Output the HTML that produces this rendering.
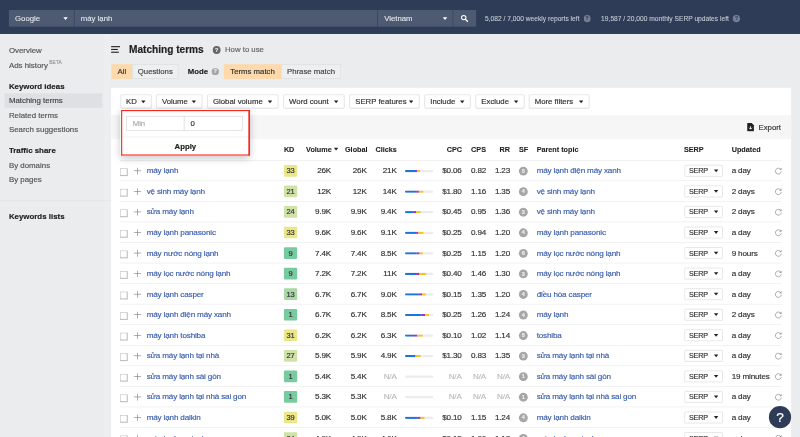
<!DOCTYPE html>
<html lang="vi">
<head>
<meta charset="utf-8">
<title>Matching terms - máy lạnh</title>
<style>
*{box-sizing:border-box;margin:0;padding:0}
html,body{width:800px;height:437px;overflow:hidden;background:#ebecee}
body{position:relative}
body{font-family:"Liberation Sans",sans-serif;font-size:14px;color:#333;-webkit-text-stroke:0.3px currentColor}
#wrap{position:absolute;left:-20px;top:-20px;width:840px;height:477px;overflow:hidden;filter:blur(0.5px)}
#stage{position:absolute;left:20px;top:20px;width:1440px;height:787px;transform:scale(0.55556);transform-origin:0 0;background:#ebecee;overflow:hidden}
a{color:#3b5eae;text-decoration:none}
.caret{display:inline-block;width:0;height:0;border-left:4px solid transparent;border-right:4px solid transparent;border-top:5px solid #222;vertical-align:middle}
/* header */
#hdr{position:absolute;left:0;top:0;width:1440px;height:61px;background:#2e3c57;-webkit-text-stroke:0.15px currentColor;border-bottom:1px solid #27334a}
#hdr .box{position:absolute;top:18px;height:30px;background:#4e5a72;color:#e6e9ee;font-size:14px;line-height:30px;padding-left:11px}
#hdr .box .caret{position:absolute;right:9px;top:13px;border-top-color:#fff}
#hdr .info{position:absolute;top:18px;line-height:30px;font-size:12px;color:#c6ccd6;white-space:nowrap}
#hdr .info .q{width:12.5px;height:12.5px;line-height:12.5px;font-size:9px;background:#747e94;color:#2e3c57;margin-left:0.8px;position:relative;top:-0.5px}
.q{display:inline-block;width:14px;height:14px;border-radius:50%;background:#8e96a6;color:#2e3c57;font-size:10px;font-weight:bold;line-height:14px;text-align:center;vertical-align:middle}
/* sidebar */
#side{position:absolute;left:0;top:60px;width:200px;height:727px}
#side div{position:absolute;left:8px;width:176px;height:26px;line-height:26px;padding-left:8px;font-size:14.2px;color:#555;white-space:nowrap}
#side div.h{font-weight:bold;color:#222}
#side div.act{background:#dee0e4;color:#444}
#side sup{font-size:8.5px;letter-spacing:0.3px;color:#999;position:relative;top:0px;left:2.5px;vertical-align:super;line-height:0}
#side hr{position:absolute;left:0;top:301px;width:200px;height:1px;border:0;background:#dfe0e3}
/* main */
#title{position:absolute;left:232.3px;top:77.8px;line-height:24px;font-size:18.2px;letter-spacing:0;font-weight:bold;color:#222;white-space:nowrap}
#burger{position:absolute;left:200px;top:83px;width:16px;height:13px}
#burger i{position:absolute;left:0;height:2px;background:#222}
#howq{position:absolute;left:382.6px;top:82.6px;width:14.5px;height:14.5px;line-height:14.5px}
#how{position:absolute;left:405px;top:76.8px;line-height:24px;color:#666;white-space:nowrap}
.seg{position:absolute;top:116px;height:26px;line-height:24px;border:1px solid #d8d9dc;font-size:14px;color:#444;text-align:center;white-space:nowrap;background:#eeeff1}
.seg.on{background:#fdd9ab;border-color:#fdd9ab;color:#333}
#mode{position:absolute;left:338px;top:116px;line-height:26px;font-weight:bold;color:#222}
#panel{position:absolute;left:200px;top:157.6px;width:1224px;height:640px;background:#fff}
.fb{position:absolute;top:170px;height:25px;line-height:24.2px;border:1px solid #d6d6d6;border-radius:2px;background:#fff;font-size:14px;color:#333;padding-left:9.4px;white-space:nowrap;box-shadow:0 1px 1px rgba(0,0,0,.05)}
.fb .caret{position:absolute;right:10px;top:9.6px}
#tool{position:absolute;left:200px;top:207px;width:1224px;height:43px;background:#f6f6f6}
#export{position:absolute;left:1365.3px;top:216.2px;line-height:26px;color:#333;white-space:nowrap}
#expi{position:absolute;left:1344px;top:221px;width:14px;height:15.5px}
/* table */
#th{position:absolute;left:216px;top:250.4px;width:1191px;height:38.4px;border-bottom:1px solid #e6e6e6;font-weight:bold;color:#222;font-size:13px;-webkit-text-stroke:0.15px currentColor}
#th span{position:absolute;top:0;line-height:38px;white-space:nowrap}
.tr{position:absolute;left:216px;width:1191px;height:37px;border-bottom:1px solid #e8e8e8;line-height:36.6px;font-size:14.6px;letter-spacing:-0.3px;white-space:nowrap}
.tr>*{position:absolute;top:0}
.cb{left:-0.4px;top:13.6px!important;width:14.4px;height:14.4px;background:linear-gradient(#fff,#fff) center/11.2px 11.2px no-repeat,#bebebe}
.plus{left:25.3px;top:12.6px!important;width:12px;height:12px}
.plus:before{content:"";position:absolute;left:0;top:5.1px;width:12.4px;height:1.7px;background:#707070}
.plus:after{content:"";position:absolute;left:5.3px;top:0;width:1.7px;height:12px;background:#707070}
.kw{left:48px}
.kd{left:295px;top:8px!important;width:24px;height:21px;line-height:21px;text-align:center;border-radius:2px;color:#333;font-size:13.5px}
.c{text-align:right;width:80px;color:#333}
.c.na{color:#bbb}
.vol{left:300px}.glob{left:364px}.clk{left:418px}.cpc{left:535px}.cps{left:579px}.rr{left:622px}
.bar{left:513px;top:16.5px!important;width:51px;height:4px;background:#ececec;border-radius:2px;overflow:hidden;font-size:0;line-height:0}
.bar i{display:inline-block;height:4px;vertical-align:top}
.sf{left:718px;top:10.5px!important;width:16px;height:16px;border-radius:50%;background:#a6a6a6;color:#ececec;font-size:10px;font-weight:bold;line-height:16px;text-align:center;letter-spacing:0}
.pt{left:750px}
.serp{left:1016px;top:8px!important;width:69px;height:21px;line-height:19px;border:1px solid #d6d6d6;border-radius:2px;padding-left:7px;color:#333;font-size:13px}
.serp .caret{position:absolute;right:7.5px;top:7px}
.upd{left:1101px;color:#333}
.rf{left:1177.5px;top:11.5px!important;width:14px;height:14px}
#stage2{position:absolute;left:0;top:0;width:1440px;height:787px;transform:scale(0.55556);transform-origin:0 0;pointer-events:none}
#red{position:absolute;left:217.7px;top:197.8px;width:232px;height:82.1px}
#red i{position:absolute;background:#f8241e}
/* popup */
#pop{position:absolute;left:217.2px;top:197.4px;width:232.8px;height:83px;background:#fff;border:2.9px solid #fff;box-shadow:0 4px 14px rgba(0,0,0,.24)}
#pop .in{position:absolute;top:9.2px;height:26px;line-height:24px;border:1px solid #d0d0d0;background:#fff;padding-left:11px;font-size:14px}
#pop .sep{position:absolute;left:0;right:0;top:46.2px;height:1px;background:#e6e6e6}
#pop .ap{position:absolute;left:0;right:0;top:50.2px;line-height:26px;text-align:center;font-weight:bold;color:#222}
#help{position:absolute;left:1384px;top:730.6px;width:40px;height:40px;border-radius:50%;background:#2e3c57;color:#fff;font-size:24.5px;font-weight:normal;line-height:40px;text-align:center;-webkit-text-stroke:0.4px #fff}
</style>
</head>
<body>
<div id="wrap"><div id="stage">
<div style="position:absolute;left:187px;top:40px;width:13px;height:750px;background:#edeef0"></div>
<div id="hdr">
 <div class="box" style="left:16px;width:117px">Google<b class="caret" style="right:11px"></b></div>
 <div class="box" style="left:134px;width:545px;padding-left:11.3px">máy lạnh</div>
 <div class="box" style="left:680px;width:135px;padding-left:11.5px">Vietnam<b class="caret" style="right:10px"></b></div>
 <div class="box" style="left:816px;width:41px;padding:0"><svg viewBox="0 0 16 16" style="position:absolute;left:13px;top:8px;width:14px;height:14px"><circle cx="6.5" cy="6.5" r="4.5" fill="none" stroke="#fff" stroke-width="2.2"/><path d="M10 10l4.5 4.5" stroke="#fff" stroke-width="2.6" stroke-linecap="round"/></svg></div>
 <div class="info" style="left:873px">5,082 / 7,000 weekly reports left &nbsp;<span class="q">?</span></div>
 <div class="info" style="left:1082px">19,587 / 20,000 monthly SERP updates left &nbsp;<span class="q">?</span></div>
</div>
<div id="side">
 <div style="top:18px">Overview</div>
 <div style="top:44px">Ads history<sup>BETA</sup></div>
 <div class="h" style="top:82px">Keyword ideas</div>
 <div class="act" style="top:108px">Matching terms</div>
 <div style="top:134px">Related terms</div>
 <div style="top:160px">Search suggestions</div>
 <div class="h" style="top:198px">Traffic share</div>
 <div style="top:224px">By domains</div>
 <div style="top:250px">By pages</div>
 <hr>
 <div class="h" style="top:317px">Keywords lists</div>
</div>
<div id="burger"><i style="top:0;width:16px"></i><i style="top:5px;width:12px"></i><i style="top:10px;width:14px"></i></div>
<div id="title">Matching terms</div>
<span id="howq" class="q" style="background:#666;color:#ebecee">?</span>
<div id="how">How to use</div>
<div class="seg on" style="left:201px;width:37px">All</div>
<div class="seg" style="left:238px;width:83px">Questions</div>
<div id="mode">Mode <span class="q" style="background:#a4a4a6;color:#ebecee;margin-left:3px;position:relative;top:-1px;width:12.4px;height:12.4px;line-height:12.4px;font-size:9px">?</span></div>
<div class="seg on" style="left:403px;width:103px">Terms match</div>
<div class="seg" style="left:506px;width:107.5px">Phrase match</div>
<div id="panel"></div>
<div class="fb" style="left:217px;width:56px;padding-left:9px">KD<b class="caret"></b></div>
<div class="fb" style="left:281px;width:83px">Volume<b class="caret"></b></div>
<div class="fb" style="left:373px;width:128px">Global volume<b class="caret"></b></div>
<div class="fb" style="left:510px;width:110px">Word count<b class="caret"></b></div>
<div class="fb" style="left:629px;width:126px">SERP features<b class="caret"></b></div>
<div class="fb" style="left:764px;width:83px">Include<b class="caret"></b></div>
<div class="fb" style="left:856px;width:88px">Exclude<b class="caret"></b></div>
<div class="fb" style="left:952px;width:109px">More filters<b class="caret"></b></div>
<div id="tool"></div>
<svg id="expi" viewBox="0 0 14 15"><path d="M1 0h8l4 4v11H1z" fill="#222"/><path d="M7 6v5M4.5 8.8L7 11.3 9.5 8.8" stroke="#fff" stroke-width="1.6" fill="none"/></svg>
<div id="export">Export</div>
<div id="th">
 <span style="left:295px">KD</span>
 <span style="left:335px">Volume <b class="caret" style="position:relative;top:-1px"></b></span>
 <span style="left:405px">Global</span>
 <span style="left:460px">Clicks</span>
 <span style="left:588px">CPC</span>
 <span style="left:632px">CPS</span>
 <span style="left:683px">RR</span>
 <span style="left:718px">SF</span>
 <span style="left:750px">Parent topic</span>
 <span style="left:1015px">SERP</span>
 <span style="left:1101px">Updated</span>
</div>
<div id="rows">
<div class="tr" style="top:289.0px">
<span class="cb"></span><span class="plus"></span>
<a class="kw">máy lạnh</a>
<span class="kd" style="background:#eae689">33</span>
<div class="c vol">26K</div><div class="c glob">26K</div><div class="c clk">21K</div>
<div class="bar"><i style="width:18px;background:#1f72e0"></i><i style="width:4px;background:#9a35bd"></i><i style="width:5px;background:#f7c61a"></i></div>
<div class="c cpc">$0.06</div><div class="c cps">0.82</div><div class="c rr">1.23</div>
<span class="sf">5</span>
<a class="pt">máy lạnh điện máy xanh</a>
<span class="serp">SERP<b class="caret"></b></span>
<span class="upd">a day</span>
<svg class="rf" viewBox="0 0 14 14"><path d="M11.4 4A5.3 5.3 0 1 0 12.3 7.6" fill="none" stroke="#9a9a9a" stroke-width="1.5"/><path d="M12.8 0.8v4.4H8.4z" fill="#9a9a9a"/></svg>
</div>
<div class="tr" style="top:326.0px">
<span class="cb"></span><span class="plus"></span>
<a class="kw">vệ sinh máy lạnh</a>
<span class="kd" style="background:#cfe3a8">21</span>
<div class="c vol">12K</div><div class="c glob">12K</div><div class="c clk">14K</div>
<div class="bar"><i style="width:20px;background:#1f72e0"></i><i style="width:5px;background:#9a35bd"></i><i style="width:8px;background:#f7c61a"></i></div>
<div class="c cpc">$1.80</div><div class="c cps">1.16</div><div class="c rr">1.35</div>
<span class="sf">4</span>
<a class="pt">vệ sinh máy lạnh</a>
<span class="serp">SERP<b class="caret"></b></span>
<span class="upd">2 days</span>
<svg class="rf" viewBox="0 0 14 14"><path d="M11.4 4A5.3 5.3 0 1 0 12.3 7.6" fill="none" stroke="#9a9a9a" stroke-width="1.5"/><path d="M12.8 0.8v4.4H8.4z" fill="#9a9a9a"/></svg>
</div>
<div class="tr" style="top:363.0px">
<span class="cb"></span><span class="plus"></span>
<a class="kw">sửa máy lạnh</a>
<span class="kd" style="background:#cfe3a8">24</span>
<div class="c vol">9.9K</div><div class="c glob">9.9K</div><div class="c clk">9.4K</div>
<div class="bar"><i style="width:16px;background:#1f72e0"></i><i style="width:4px;background:#9a35bd"></i><i style="width:8px;background:#f7c61a"></i></div>
<div class="c cpc">$0.45</div><div class="c cps">0.95</div><div class="c rr">1.36</div>
<span class="sf">3</span>
<a class="pt">vệ sinh máy lạnh</a>
<span class="serp">SERP<b class="caret"></b></span>
<span class="upd">2 days</span>
<svg class="rf" viewBox="0 0 14 14"><path d="M11.4 4A5.3 5.3 0 1 0 12.3 7.6" fill="none" stroke="#9a9a9a" stroke-width="1.5"/><path d="M12.8 0.8v4.4H8.4z" fill="#9a9a9a"/></svg>
</div>
<div class="tr" style="top:400.0px">
<span class="cb"></span><span class="plus"></span>
<a class="kw">máy lạnh panasonic</a>
<span class="kd" style="background:#eae689">33</span>
<div class="c vol">9.6K</div><div class="c glob">9.6K</div><div class="c clk">9.1K</div>
<div class="bar"><i style="width:20px;background:#1f72e0"></i><i style="width:4px;background:#9a35bd"></i><i style="width:9px;background:#f7c61a"></i></div>
<div class="c cpc">$0.25</div><div class="c cps">0.94</div><div class="c rr">1.20</div>
<span class="sf">4</span>
<a class="pt">máy lạnh panasonic</a>
<span class="serp">SERP<b class="caret"></b></span>
<span class="upd">a day</span>
<svg class="rf" viewBox="0 0 14 14"><path d="M11.4 4A5.3 5.3 0 1 0 12.3 7.6" fill="none" stroke="#9a9a9a" stroke-width="1.5"/><path d="M12.8 0.8v4.4H8.4z" fill="#9a9a9a"/></svg>
</div>
<div class="tr" style="top:437.0px">
<span class="cb"></span><span class="plus"></span>
<a class="kw">máy nước nóng lạnh</a>
<span class="kd" style="background:#78caa0">9</span>
<div class="c vol">7.4K</div><div class="c glob">7.4K</div><div class="c clk">8.5K</div>
<div class="bar"><i style="width:21px;background:#1f72e0"></i><i style="width:5px;background:#9a35bd"></i><i style="width:6px;background:#f7c61a"></i></div>
<div class="c cpc">$0.25</div><div class="c cps">1.15</div><div class="c rr">1.20</div>
<span class="sf">6</span>
<a class="pt">máy lọc nước nóng lạnh</a>
<span class="serp">SERP<b class="caret"></b></span>
<span class="upd">9 hours</span>
<svg class="rf" viewBox="0 0 14 14"><path d="M11.4 4A5.3 5.3 0 1 0 12.3 7.6" fill="none" stroke="#9a9a9a" stroke-width="1.5"/><path d="M12.8 0.8v4.4H8.4z" fill="#9a9a9a"/></svg>
</div>
<div class="tr" style="top:474.0px">
<span class="cb"></span><span class="plus"></span>
<a class="kw">máy lọc nước nóng lạnh</a>
<span class="kd" style="background:#78caa0">9</span>
<div class="c vol">7.2K</div><div class="c glob">7.2K</div><div class="c clk">11K</div>
<div class="bar"><i style="width:20px;background:#1f72e0"></i><i style="width:6px;background:#9a35bd"></i><i style="width:12px;background:#f7c61a"></i></div>
<div class="c cpc">$0.40</div><div class="c cps">1.46</div><div class="c rr">1.30</div>
<span class="sf">3</span>
<a class="pt">máy lọc nước nóng lạnh</a>
<span class="serp">SERP<b class="caret"></b></span>
<span class="upd">a day</span>
<svg class="rf" viewBox="0 0 14 14"><path d="M11.4 4A5.3 5.3 0 1 0 12.3 7.6" fill="none" stroke="#9a9a9a" stroke-width="1.5"/><path d="M12.8 0.8v4.4H8.4z" fill="#9a9a9a"/></svg>
</div>
<div class="tr" style="top:511.0px">
<span class="cb"></span><span class="plus"></span>
<a class="kw">máy lạnh casper</a>
<span class="kd" style="background:#a9d8a6">13</span>
<div class="c vol">6.7K</div><div class="c glob">6.7K</div><div class="c clk">9.0K</div>
<div class="bar"><i style="width:25px;background:#1f72e0"></i><i style="width:6px;background:#9a35bd"></i><i style="width:6px;background:#f7c61a"></i></div>
<div class="c cpc">$0.15</div><div class="c cps">1.35</div><div class="c rr">1.20</div>
<span class="sf">4</span>
<a class="pt">điều hòa casper</a>
<span class="serp">SERP<b class="caret"></b></span>
<span class="upd">a day</span>
<svg class="rf" viewBox="0 0 14 14"><path d="M11.4 4A5.3 5.3 0 1 0 12.3 7.6" fill="none" stroke="#9a9a9a" stroke-width="1.5"/><path d="M12.8 0.8v4.4H8.4z" fill="#9a9a9a"/></svg>
</div>
<div class="tr" style="top:548.0px">
<span class="cb"></span><span class="plus"></span>
<a class="kw">máy lạnh điện máy xanh</a>
<span class="kd" style="background:#78caa0">1</span>
<div class="c vol">6.7K</div><div class="c glob">6.7K</div><div class="c clk">8.5K</div>
<div class="bar"><i style="width:30px;background:#1f72e0"></i><i style="width:6px;background:#9a35bd"></i><i style="width:7px;background:#f7c61a"></i></div>
<div class="c cpc">$0.25</div><div class="c cps">1.26</div><div class="c rr">1.24</div>
<span class="sf">4</span>
<a class="pt">máy lạnh</a>
<span class="serp">SERP<b class="caret"></b></span>
<span class="upd">2 days</span>
<svg class="rf" viewBox="0 0 14 14"><path d="M11.4 4A5.3 5.3 0 1 0 12.3 7.6" fill="none" stroke="#9a9a9a" stroke-width="1.5"/><path d="M12.8 0.8v4.4H8.4z" fill="#9a9a9a"/></svg>
</div>
<div class="tr" style="top:585.0px">
<span class="cb"></span><span class="plus"></span>
<a class="kw">máy lạnh toshiba</a>
<span class="kd" style="background:#eae689">31</span>
<div class="c vol">6.2K</div><div class="c glob">6.2K</div><div class="c clk">6.3K</div>
<div class="bar"><i style="width:16px;background:#1f72e0"></i><i style="width:6px;background:#9a35bd"></i><i style="width:10px;background:#f7c61a"></i></div>
<div class="c cpc">$0.10</div><div class="c cps">1.02</div><div class="c rr">1.14</div>
<span class="sf">5</span>
<a class="pt">toshiba</a>
<span class="serp">SERP<b class="caret"></b></span>
<span class="upd">a day</span>
<svg class="rf" viewBox="0 0 14 14"><path d="M11.4 4A5.3 5.3 0 1 0 12.3 7.6" fill="none" stroke="#9a9a9a" stroke-width="1.5"/><path d="M12.8 0.8v4.4H8.4z" fill="#9a9a9a"/></svg>
</div>
<div class="tr" style="top:622.0px">
<span class="cb"></span><span class="plus"></span>
<a class="kw">sửa máy lạnh tại nhà</a>
<span class="kd" style="background:#cfe3a8">27</span>
<div class="c vol">5.9K</div><div class="c glob">5.9K</div><div class="c clk">4.9K</div>
<div class="bar"><i style="width:19px;background:#1f72e0"></i><i style="width:0px;background:#9a35bd"></i><i style="width:9px;background:#f7c61a"></i></div>
<div class="c cpc">$1.30</div><div class="c cps">0.83</div><div class="c rr">1.35</div>
<span class="sf">3</span>
<a class="pt">sửa máy lạnh tại nhà</a>
<span class="serp">SERP<b class="caret"></b></span>
<span class="upd">a day</span>
<svg class="rf" viewBox="0 0 14 14"><path d="M11.4 4A5.3 5.3 0 1 0 12.3 7.6" fill="none" stroke="#9a9a9a" stroke-width="1.5"/><path d="M12.8 0.8v4.4H8.4z" fill="#9a9a9a"/></svg>
</div>
<div class="tr" style="top:659.0px">
<span class="cb"></span><span class="plus"></span>
<a class="kw">sửa máy lạnh sài gòn</a>
<span class="kd" style="background:#78caa0">1</span>
<div class="c vol">5.4K</div><div class="c glob">5.4K</div><div class="c clk na">N/A</div>
<div class="bar"></div>
<div class="c cpc na">N/A</div><div class="c cps na">N/A</div><div class="c rr na">N/A</div>
<span class="sf">1</span>
<a class="pt">sửa máy lạnh sài gòn</a>
<span class="serp">SERP<b class="caret"></b></span>
<span class="upd">19 minutes</span>
<svg class="rf" viewBox="0 0 14 14"><path d="M11.4 4A5.3 5.3 0 1 0 12.3 7.6" fill="none" stroke="#9a9a9a" stroke-width="1.5"/><path d="M12.8 0.8v4.4H8.4z" fill="#9a9a9a"/></svg>
</div>
<div class="tr" style="top:696.0px">
<span class="cb"></span><span class="plus"></span>
<a class="kw">sửa máy lạnh tại nhà sai gon</a>
<span class="kd" style="background:#78caa0">1</span>
<div class="c vol">5.3K</div><div class="c glob">5.3K</div><div class="c clk na">N/A</div>
<div class="bar"></div>
<div class="c cpc na">N/A</div><div class="c cps na">N/A</div><div class="c rr na">N/A</div>
<span class="sf">1</span>
<a class="pt">sửa máy lạnh tại nhà sai gon</a>
<span class="serp">SERP<b class="caret"></b></span>
<span class="upd">a day</span>
<svg class="rf" viewBox="0 0 14 14"><path d="M11.4 4A5.3 5.3 0 1 0 12.3 7.6" fill="none" stroke="#9a9a9a" stroke-width="1.5"/><path d="M12.8 0.8v4.4H8.4z" fill="#9a9a9a"/></svg>
</div>
<div class="tr" style="top:733.0px">
<span class="cb"></span><span class="plus"></span>
<a class="kw">máy lạnh daikin</a>
<span class="kd" style="background:#eae689">39</span>
<div class="c vol">5.0K</div><div class="c glob">5.0K</div><div class="c clk">5.8K</div>
<div class="bar"><i style="width:23px;background:#1f72e0"></i><i style="width:5px;background:#9a35bd"></i><i style="width:7px;background:#f7c61a"></i></div>
<div class="c cpc">$0.10</div><div class="c cps">1.15</div><div class="c rr">1.24</div>
<span class="sf">4</span>
<a class="pt">máy lạnh daikin</a>
<span class="serp">SERP<b class="caret"></b></span>
<span class="upd">a day</span>
<svg class="rf" viewBox="0 0 14 14"><path d="M11.4 4A5.3 5.3 0 1 0 12.3 7.6" fill="none" stroke="#9a9a9a" stroke-width="1.5"/><path d="M12.8 0.8v4.4H8.4z" fill="#9a9a9a"/></svg>
</div>
<div class="tr" style="top:770.0px">
<span class="cb"></span><span class="plus"></span>
<a class="kw">máy lạnh reetech</a>
<span class="kd" style="background:#cfe3a8">24</span>
<div class="c vol">4.9K</div><div class="c glob">4.9K</div><div class="c clk">4.6K</div>
<div class="bar"><i style="width:22px;background:#1f72e0"></i><i style="width:4px;background:#9a35bd"></i><i style="width:5px;background:#f7c61a"></i></div>
<div class="c cpc">$0.15</div><div class="c cps">1.06</div><div class="c rr">1.18</div>
<span class="sf">4</span>
<a class="pt">máy lạnh reetech</a>
<span class="serp">SERP<b class="caret"></b></span>
<span class="upd">a day</span>
<svg class="rf" viewBox="0 0 14 14"><path d="M11.4 4A5.3 5.3 0 1 0 12.3 7.6" fill="none" stroke="#9a9a9a" stroke-width="1.5"/><path d="M12.8 0.8v4.4H8.4z" fill="#9a9a9a"/></svg>
</div>
</div>
<div id="pop">
 <div class="in" style="left:7.6px;width:105px;color:#aaa">Min</div>
 <div class="in" style="left:111.6px;width:106px;color:#333">0</div>
 <div class="sep"></div>
 <div class="ap">Apply</div>
</div>
<div id="help">?</div>
</div></div>
<div id="stage2"><div id="red"><i style="left:0;top:0;width:100%;height:2px"></i><i style="left:0;bottom:0;width:100%;height:2.4px"></i><i style="left:0;top:0;width:2px;height:100%"></i><i style="right:0;top:0;width:2.4px;height:100%"></i></div></div>
</body>
</html>
